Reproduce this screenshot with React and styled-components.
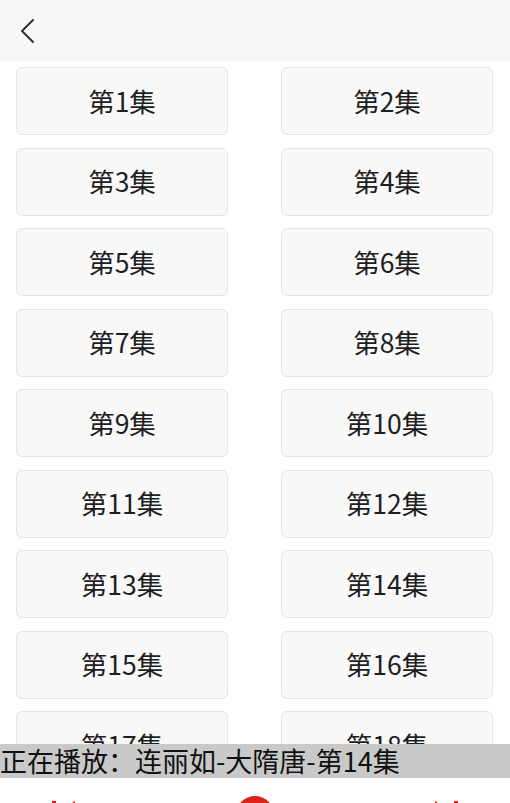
import React from "react";
import styled, { createGlobalStyle } from "styled-components";

const GlobalStyle = createGlobalStyle`
  html, body {
    margin: 0;
    padding: 0;
    overflow: hidden;
    background: #fff;
  }
  body {
    font-family: "Noto Sans CJK SC", "Noto Sans", sans-serif;
  }
`;

const Page = styled.div`
  width: 510px;
  height: 860px;
  display: flex;
  flex-direction: column;
  background: #fff;
`;

const Header = styled.header`
  height: 62px;
  flex-shrink: 0;
  display: flex;
  align-items: center;
  padding-left: 14px;
  background: #f7f7f7;
`;

const BackButton = styled.button`
  border: none;
  background: transparent;
  padding: 0;
  width: 26px;
  height: 30px;
  display: flex;
  align-items: center;
  justify-content: center;
  cursor: pointer;
`;

const ListArea = styled.div`
  height: 682px;
  flex-shrink: 0;
  overflow: hidden;
`;

const EpisodeGrid = styled.div`
  display: grid;
  grid-template-columns: 212px 212px;
  column-gap: 53px;
  row-gap: 12.5px;
  padding: 5px 0 0 16px;
`;

const EpisodeButton = styled.button`
  height: 68px;
  box-sizing: border-box;
  border: 1px solid #e4e4e4;
  border-radius: 6px;
  background: #f8f8f8;
  color: #1e1e1e;
  font-family: "Noto Sans CJK SC", sans-serif;
  font-size: 26.5px;
  line-height: 1;
  padding: 0;
  cursor: pointer;
`;

const NowPlaying = styled.div`
  height: 34px;
  flex-shrink: 0;
  background: #c9c9c9;
  color: #111;
  font-family: "Noto Sans CJK SC", sans-serif;
  font-size: 27px;
  line-height: 34px;
  white-space: nowrap;
  overflow: hidden;
`;

const Controls = styled.div`
  height: 80px;
  flex-shrink: 0;
  display: flex;
  align-items: flex-start;
  background: #fff;
`;

const ControlSlot = styled.div`
  width: ${({ w }) => w}px;
  height: 60px;
  display: flex;
  justify-content: center;
  padding-top: ${({ top }) => top}px;
`;

const episodes = Array.from({ length: 18 }, (_, i) => i + 1);

const Chevron = () => (
  <svg width="18" height="28" viewBox="0 0 18 28">
    <path d="M15 3 L4 14 L15 25" fill="none" stroke="#333" strokeWidth="2" strokeLinecap="round" strokeLinejoin="round" />
  </svg>
);

const PrevIcon = () => (
  <svg width="30" height="30" viewBox="0 0 30 30">
    <rect x="3" y="4" width="4" height="22" fill="#d9241b" />
    <path d="M26 4 L9 15 L26 26 Z" fill="#d9241b" />
  </svg>
);

const NextIcon = () => (
  <svg width="30" height="30" viewBox="0 0 30 30">
    <rect x="23" y="4" width="4" height="22" fill="#d9241b" />
    <path d="M4 4 L21 15 L4 26 Z" fill="#d9241b" />
  </svg>
);

const PlayIcon = () => (
  <svg width="40" height="40" viewBox="0 0 40 40">
    <circle cx="20" cy="20" r="19" fill="#d9241b" />
    <rect x="14" y="12" width="4" height="16" fill="#fff" />
    <rect x="23" y="12" width="4" height="16" fill="#fff" />
  </svg>
);

export default function App() {
  return (
    <>
      <GlobalStyle />
      <Page>
        <Header>
          <BackButton aria-label="back">
            <Chevron />
          </BackButton>
        </Header>
        <ListArea>
          <EpisodeGrid>
            {episodes.map((n) => (
              <EpisodeButton key={n}>第{n}集</EpisodeButton>
            ))}
          </EpisodeGrid>
        </ListArea>
        <NowPlaying>正在播放：连丽如-大隋唐-第14集</NowPlaying>
        <Controls>
          <ControlSlot w={128} top={19}>
            <PrevIcon />
          </ControlSlot>
          <ControlSlot w={254} top={17}>
            <PlayIcon />
          </ControlSlot>
          <ControlSlot w={128} top={19}>
            <NextIcon />
          </ControlSlot>
        </Controls>
      </Page>
    </>
  );
}
